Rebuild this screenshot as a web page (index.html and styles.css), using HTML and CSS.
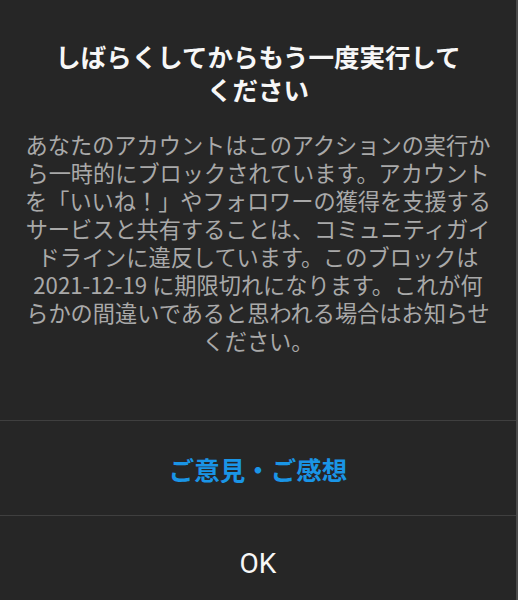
FILE: index.html
```html
<!DOCTYPE html>
<html lang="ja">
<head>
<meta charset="utf-8">
<title>ブロック</title>
<link rel="stylesheet" href="styles.css">
</head>
<body>
<div class="dialog">
  <div class="content">
    <h1 class="title">しばらくしてからもう一度実行して<br>ください</h1>
    <p class="message">あなたのアカウントはこのアクションの実行か<br>ら一時的にブロックされています。アカウント<br>を「いいね！」やフォロワーの獲得を支援する<br>サービスと共有することは、コミュニティガイ<br>ドラインに違反しています。このブロックは<br>2021-12-19 に期限切れになります。これが何<br>らかの間違いであると思われる場合はお知らせ<br>ください。</p>
  </div>
  <div class="btn btn-link">ご意見・ご感想</div>
  <div class="btn btn-ok">OK</div>
</div>
</body>
</html>
```

FILE: styles.css
```css
html, body {
  margin: 0;
  padding: 0;
  background: #262626;
}
body {
  font-family: "Noto Sans CJK JP", "Noto Sans", sans-serif;
  overflow: hidden;
}
.dialog {
  box-sizing: border-box;
  width: 518px;
  min-height: 600px;
  border-right: 2px solid #4a4a4a;
  display: flex;
  flex-direction: column;
}
.content {
  padding: 39px 20px 0;
  text-align: center;
}
.title {
  margin: 0;
  font-size: 25.5px;
  font-weight: 700;
  line-height: 33px;
  color: #f7f7f7;
}
.message {
  margin: 25px 0 0;
  padding-bottom: 66px;
  font-size: 22.2px;
  line-height: 28px;
  color: #a9a9a9;
}
.btn {
  height: 94px;
  border-top: 1px solid #3f3f3f;
  display: flex;
  align-items: center;
  justify-content: center;
}
.btn-link {
  font-size: 25.5px;
  font-weight: 700;
  color: #1a95e6;
}
.btn-ok {
  font-family: Roboto, "Noto Sans CJK JP", sans-serif;
  font-size: 28px;
  color: #f7f7f7;
}
```
